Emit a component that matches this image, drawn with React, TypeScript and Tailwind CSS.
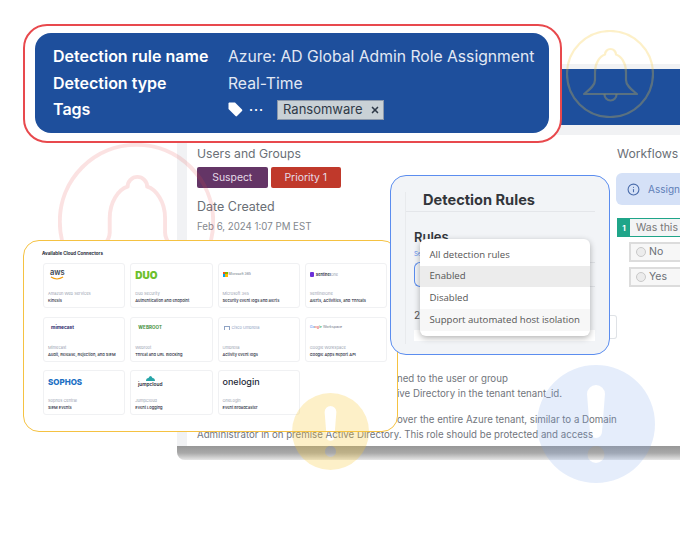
import { Info, X } from "lucide-react";

const connectors = [
  { logo: "aws", name: "Amazon Web Services", desc: "Kinesis" },
  { logo: "duo", name: "Duo Security", desc: "Authentication and endpoint" },
  { logo: "ms", name: "Microsoft 365", desc: "Security event logs and alerts" },
  { logo: "s1", name: "SentinelOne", desc: "Alerts, Activities, and Threats" },
  { logo: "mimecast", name: "Mimecast", desc: "Audit, Release, Rejection, and SIEM" },
  { logo: "webroot", name: "Webroot", desc: "Threat and URL Blocking" },
  { logo: "cisco", name: "Umbrella", desc: "Activity event logs" },
  { logo: "google", name: "Google Workspace", desc: "Google Apps Report API" },
  { logo: "sophos", name: "Sophos Central", desc: "SIEM Events" },
  { logo: "jump", name: "JumpCloud", desc: "Event Logging" },
  { logo: "onelogin", name: "OneLogin", desc: "Event Broadcaster" },
];

function Logo({ kind }: { kind: string }) {
  if (kind === "aws")
    return (
      <div className="flex flex-col items-start pl-[2px]">
        <span className="text-[7.500px] leading-[6px] font-semibold text-[#3a4552]">aws</span>
        <svg width="14" height="4" viewBox="0 0 15 4" fill="none">
          <path d="M1 1c4 2.500 9 2.500 13 0" stroke="#f59e0b" strokeWidth="1.200" />
        </svg>
      </div>
    );
  if (kind === "duo")
    return <span className="text-[10px] leading-[10px] font-black text-[#6cc02c]">DUO</span>;
  if (kind === "ms")
    return (
      <div className="flex items-center gap-[1px]">
        <div className="grid h-[5px] w-[5px] grid-cols-2">
          <div className="bg-[#f25022]" />
          <div className="bg-[#7fba00]" />
          <div className="bg-[#00a4ef]" />
          <div className="bg-[#ffb900]" />
        </div>
        <span className="text-[3.400px] text-gray-500">Microsoft 365</span>
      </div>
    );
  if (kind === "s1")
    return (
      <div className="flex items-center gap-[2px]">
        <div className="h-[5px] w-[4px] rounded-[1px] bg-[#6b2fd9]" />
        <span className="text-[3.800px] font-semibold text-gray-800">
          Sentinel<span className="font-normal text-gray-400">One</span>
        </span>
      </div>
    );
  if (kind === "mimecast") return <span className="pl-[3px] text-[4.800px] font-bold text-[#2c2a6b]">mimecast</span>;
  if (kind === "webroot")
    return <span className="pl-[3px] text-[4.500px] font-bold tracking-wide text-[#3f8f3a]">WEBROOT</span>;
  if (kind === "cisco")
    return (
      <div className="flex items-center gap-[2px] pl-[1px]">
        <div className="h-[4px] w-[6px] border-x border-t border-[#8fa3c4]" />
        <span className="text-[3.900px] text-[#8fa3c4]">Cisco Umbrella</span>
      </div>
    );
  if (kind === "google")
    return (
      <span className="text-[3.600px] text-gray-500">
        <span className="text-[#4285f4]">Go</span>
        <span className="text-[#ea4335]">og</span>
        <span className="text-[#34a853]">le</span> Workspace
      </span>
    );
  if (kind === "sophos") return <span className="text-[8px] leading-[10px] font-extrabold text-[#1b6fc4]">SOPHOS</span>;
  if (kind === "jump")
    return (
      <div className="ml-[3px] flex w-[24px] flex-col items-center">
        <svg width="9" height="5" viewBox="0 0 9 5">
          <path d="M0 5c0-2 1-3 2.500-3C3 .7 4 0 4.500 0S6 .7 6.500 2C8 2 9 3 9 5z" fill="#27a5a8" />
        </svg>
        <span className="text-[4.800px] leading-[6px] font-semibold text-gray-800">jumpcloud</span>
      </div>
    );
  return <span className="text-[9px] leading-[10px] font-medium text-gray-800">onelogin</span>;
}

function ConnectorCard({ logo, name, desc }: { logo: string; name: string; desc: string }) {
  return (
    <div className="flex h-[45px] flex-col rounded-[3px] border border-[#f0f1f3] bg-white px-[4px] pt-[4px] pb-[3px]">
      <div className="flex h-[13px] items-center">
        <Logo kind={logo} />
      </div>
      <div className="mt-auto text-[4px] leading-[7px] text-gray-400">{name}</div>
      <div className="text-[4px] leading-[7px] font-medium text-gray-800">{desc}</div>
    </div>
  );
}

// ring and bell share one translucent colour so they tint whatever lies below
function BellCircle({ className, color, opacity }: { className: string; color: string; opacity: number }) {
  return (
    <svg className={className} viewBox="0 0 88 88" fill="none" stroke={color} strokeOpacity={opacity} strokeWidth="2.200">
      <circle cx="44" cy="44" r="43" />
      <path
        d="M39 24.500a5.500 5.500 0 1 1 11 0C55 26 60 33 60 42V50C60 56 66 60 71 64H18C23 60 29 56 29 50V42C29 33 34 26 39 24.500Z"
        strokeLinejoin="round"
      />
      <path d="M38.500 64.500a6 6 0 0 0 12 0" />
    </svg>
  );
}

function AlertCircle({ className, color, opacity }: { className: string; color: string; opacity: number }) {
  return (
    <svg className={className} viewBox="0 0 118 118">
      <path
        fillRule="evenodd"
        fill={color}
        fillOpacity={opacity}
        d="M59 0a59 59 0 1 0 0 118A59 59 0 1 0 59 0ZM50 29a9 9 0 0 1 18 0L65 67a6 6 0 0 1-12 0ZM59 81a8.500 8.500 0 1 1 0 17a8.500 8.500 0 1 1 0-17Z"
      />
    </svg>
  );
}

export default function App() {
  return (
    <div className="relative h-[550px] w-[680px] overflow-hidden bg-white font-['Inter',sans-serif]">
      {/* window behind the cards */}
      <div className="absolute top-[64px] left-[177px] flex h-[396px] w-[520px] flex-col rounded-b-[8px] bg-[#f1f2f4]">
        <div className="mt-[5px] h-[56px] shrink-0 bg-[#1e4f9c]" />
        <div className="h-[10px] shrink-0" />
        <div className="relative ml-[10px] flex-1 bg-white pt-[11px] pl-[10px] text-[#6a6f76]">
          <div className="text-[12.200px] leading-[16px]">Users and Groups</div>
          <div className="mt-[5px] flex gap-[3px] text-[10.400px] text-[#e6dce8]">
            <div className="flex h-[21px] w-[70.500px] items-center justify-center rounded-[2px] bg-[#643566]">Suspect</div>
            <div className="flex h-[21px] w-[70.500px] items-center justify-center rounded-[2px] bg-[#c0392b]">Priority 1</div>
          </div>
          <div className="mt-[10px] text-[12.500px] leading-[18px]">Date Created</div>
          <div className="mt-[4px] text-[9.700px] leading-[14px] text-[#84888e]">Feb 6, 2024 1:07 PM EST</div>

          <div className="absolute top-[11px] left-[430px] w-[90px]">
            <div className="text-[12.200px] leading-[16px]">Workflows</div>
            <div className="mt-[11px] -ml-[1px] flex h-[32px] items-center gap-[8px] rounded-l-[6px] bg-[#d5e1f7] pl-[11px] text-[10px] whitespace-nowrap text-[#5f7fb8]">
              <Info size={13} className="shrink-0 text-[#4a6cab]" />
              Assign y
            </div>
            <div className="mt-[13px] flex h-[19px] items-center border-y border-l border-[#1fa589] bg-[#f3f4f5]">
              <div className="flex h-full w-[12px] shrink-0 items-center justify-center bg-[#1fa589] text-[8px] font-bold text-white">1</div>
              <span className="ml-[6px] text-[10.500px] whitespace-nowrap text-[#777]">Was this a</span>
            </div>
            <div className="mt-[5px] ml-[12px] flex h-[20px] items-center gap-[3px] border-2 border-[#dcdcdc] bg-[#f7f7f7] pl-[5px] text-[10.500px]">
              <div className="h-[10px] w-[10px] rounded-full border border-[#c9c9c9] bg-[#ececec]" />
              No
            </div>
            <div className="mt-[5px] ml-[12px] flex h-[20px] items-center gap-[3px] border-2 border-[#dcdcdc] bg-[#f7f7f7] pl-[5px] text-[10.500px]">
              <div className="h-[10px] w-[10px] rounded-full border border-[#c9c9c9] bg-[#ececec]" />
              Yes
            </div>
          </div>

          <div className="absolute top-[236px] left-[10px] w-[480px] text-[9.700px] leading-[15px] text-[#72767d]">
            <div className="pl-[200px]">ned to the user or group</div>
            <div className="pl-[200px]">ive Directory in the tenant tenant_id.</div>
            <div className="mt-[11px] pl-[200px]">over the entire Azure tenant, similar to a Domain</div>
            <div>Administrator in on premise Active Directory. This role should be protected and access</div>
          </div>
        </div>
        <div className="h-[14px] shrink-0 rounded-b-[8px] bg-gradient-to-b from-[#979797] via-[#a9a9a9] to-[#e6e6e6]" />
      </div>
      <div className="absolute top-[315px] left-[575px] h-[24px] w-[42px] rounded-r-[3px] border border-l-0 border-[#dfe2e6] bg-white" />

      {/* bell badges */}
      <BellCircle className="absolute top-[30px] left-[566px] h-[88px] w-[88px]" color="#f8c93a" opacity={0.28} />
      <BellCircle className="absolute top-[143px] left-[58px] h-[157px] w-[157px]" color="#e8494d" opacity={0.16} />

      {/* connectors */}
      <div className="absolute top-[240px] left-[23px] h-[192px] w-[375px] rounded-[16px] border border-[#f5c242] bg-white pt-[9px] pl-[19px]">
        <div className="-ml-[1px] text-[4.500px] leading-[7px] font-bold text-gray-800">Available Cloud Connectors</div>
        <div className="mt-[6px] grid w-[344px] grid-cols-4 gap-x-[5px] gap-y-[8.500px]">
          {connectors.map((c) => (
            <ConnectorCard key={c.name} {...c} />
          ))}
        </div>
      </div>

      <AlertCircle className="absolute top-[393px] left-[292px] h-[77px] w-[77px]" color="#f8c93a" opacity={0.28} />
      <AlertCircle className="absolute top-[365px] left-[537px] h-[118px] w-[118px]" color="#7fa4ec" opacity={0.2} />

      {/* detection rules */}
      <div className="absolute top-[175px] left-[390px] h-[180px] w-[220px] rounded-[16px] border border-[#5b8def] bg-[#f2f4f7] px-[14px] pt-[16px]">
        <div className="h-[152px] overflow-hidden border-l border-[#e8eaed] pl-[8px]">
          <div className="-ml-[8px] h-[22px] border-b border-[#e4e6ea]">
            <div className="-mt-[2px] pl-[17px] text-[14.600px] leading-[20px] font-bold text-[#33363b]">Detection Rules</div>
          </div>
          <div className="mt-[17px] text-[13px] leading-[16px] font-semibold text-[#33363b]">Rules</div>
          <div className="mt-[5px] text-[6px] leading-[8px] text-[#5b8def]">Se</div>
          <div className="mt-[4px] flex h-[25px]">
            <div className="w-[30px] rounded-l-[6px] border border-r-0 border-[#5b8def]" />
            <div className="flex-1 border-y border-[#dfe2e6]" />
          </div>
          <div className="mt-[22px] text-[10px] leading-[12px] text-[#555]">2</div>
          <div className="mt-[9px] h-[11px] bg-white" />
        </div>
      </div>

      {/* dropdown */}
      <div className="absolute top-[239px] left-[420px] w-[170px] overflow-hidden rounded-[6px] bg-white py-[5px] font-['Open_Sans',sans-serif] text-[9.600px] text-[#555] shadow-[0_2px_6px_rgba(0,0,0,0.3)]">
        {["All detection rules", "Enabled", "Disabled", "Support automated host isolation"].map((item, i) => (
          <div
            key={item}
            className={`flex h-[21.700px] items-center pl-[9.500px] ${i === 1 ? "bg-[#ececec]" : i === 3 ? "bg-[#f7f7f7]" : ""}`}
          >
            {item}
          </div>
        ))}
      </div>

      {/* rule summary */}
      <div className="absolute top-[24px] left-[23px] h-[119px] w-[539px] rounded-[24px] border-2 border-[#e8494d] bg-white pt-[7px] pl-[10px]">
        <div className="grid h-[100px] w-[514px] grid-cols-[175px_1fr] content-center gap-y-[5.500px] rounded-[16px] bg-[#1e4f9c] pl-[18px] text-[16px] leading-[21px] text-white">
          <div className="font-semibold">Detection rule name</div>
          <div className="text-[15.700px] whitespace-nowrap text-[#e3e9f4]">Azure: AD Global Admin Role Assignment</div>
          <div className="font-semibold">Detection type</div>
          <div className="text-[15.700px] text-[#e3e9f4]">Real-Time</div>
          <div className="font-semibold">Tags</div>
          <div className="flex items-center">
            <svg width="15" height="15" viewBox="0 0 15 15" fill="white">
              <path d="M0.500 1.500C.5 1 1 .5 1.500.5H7l7 7c.5.5.5 1 0 1.500L9 14c-.5.5-1 .5-1.500 0L.5 7z" />
            </svg>
            <span className="ml-[6px] text-[12px] leading-[12px] font-bold tracking-[1px]">···</span>
            <div className="ml-[13px] flex h-[20px] w-[107px] items-center justify-between border border-[#8b98ab] bg-[#c9d1d6] pr-[3px] pl-[5px] text-[13px] text-[#2f3a48]">
              Ransomware
              <X size={10} strokeWidth={4} />
            </div>
          </div>
        </div>
      </div>
    </div>
  );
}
